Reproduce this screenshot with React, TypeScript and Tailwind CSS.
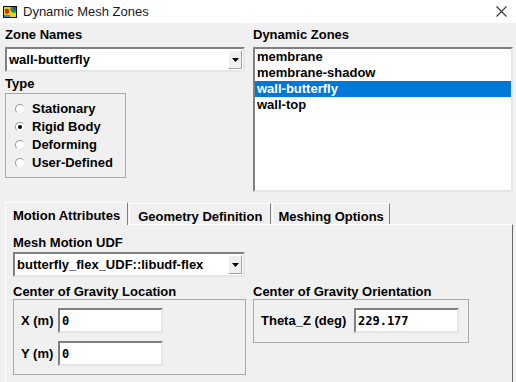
import React from "react";

const ZONES = ["membrane", "membrane-shadow", "wall-butterfly", "wall-top"];
const TYPES = ["Stationary", "Rigid Body", "Deforming", "User-Defined"];

function AppIcon() {
  return (
    <svg width="14" height="12" viewBox="0 0 14 12">
      <rect x="0" y="0" width="14" height="12" fill="#101010" />
      <rect x="1" y="1" width="12" height="10" fill="#1e9a3a" />
      <path d="M1 1 H8 Q6 4 9 6 Q11 8 13 6 V11 H1 Z" fill="#e8d21c" />
      <path d="M2 3 Q5 2 6 4 Q7 7 4 8 Q2 8 2 6 Z" fill="#d8281c" />
      <path d="M9 1 H13 V4 Q11 4 10 3 Z" fill="#2a4ad8" />
      <path d="M1 9 H7 V11 H1 Z" fill="#2a8ad8" />
    </svg>
  );
}

function Arrow() {
  return (
    <div className="w-[14px] h-full flex items-center justify-center bg-[#f0f0f0] border-l border-t border-white border-r border-r-[#a0a0a0] border-b border-b-[#a0a0a0]">
      <svg width="7" height="4" viewBox="0 0 7 4">
        <path d="M0 0 H7 L3.5 4 Z" fill="#000" />
      </svg>
    </div>
  );
}

function Dropdown({ value, width }: { value: string; width: string }) {
  return (
    <div className={`${width} h-[25px] flex bg-white border-2 border-t-[#808080] border-l-[#808080] border-b-[#e6e6e6] border-r-[#e6e6e6]`}>
      <div className="flex-1 flex items-center pl-[2px] text-[13px] font-bold text-black">{value}</div>
      <div className="py-[1px] pr-[1px]">
        <Arrow />
      </div>
    </div>
  );
}

function Field({ value }: { value: string }) {
  return (
    <div className="w-[105px] h-[25px] flex items-center pl-[2px] bg-white border-2 border-t-[#808080] border-l-[#808080] border-b-[#e6e6e6] border-r-[#e6e6e6] font-['DejaVu_Sans_Mono',monospace] text-[12px] font-bold text-black">
      {value}
    </div>
  );
}

function Radio({ checked }: { checked: boolean }) {
  return (
    <div className="w-[10px] h-[10px] rounded-full bg-white border border-t-[#9a9a9a] border-l-[#9a9a9a] border-b-[#e8e8e8] border-r-[#e8e8e8] flex items-center justify-center">
      {checked && <div className="w-[4px] h-[4px] rounded-full bg-black" />}
    </div>
  );
}

export default function App() {
  return (
    <div className="w-[516px] h-[382px] overflow-hidden bg-[#f0f0f0] font-['Liberation_Sans',Arial,sans-serif] text-black">
      <div className="h-[23px] bg-white flex items-center pl-[3px] pr-[9px]">
        <AppIcon />
        <span className="ml-[6px] text-[13px] text-[#1a1a1a]">Dynamic Mesh Zones</span>
        <svg className="ml-auto" width="11" height="11" viewBox="0 0 11 11">
          <path d="M0.5 0.5 L10.5 10.5 M10.5 0.5 L0.5 10.5" stroke="#333" strokeWidth="1.1" />
        </svg>
      </div>

      <div className="flex pt-[4px] pl-[5px] gap-[8px]">
        <div className="w-[240px] flex flex-col">
          <div className="h-[16px] text-[13px] font-bold leading-[16px]">Zone Names</div>
          <div className="mt-[4px]">
            <Dropdown value="wall-butterfly" width="w-[240px]" />
          </div>
          <div className="mt-[4px] h-[16px] text-[13px] font-bold leading-[16px]">Type</div>
          <div className="mt-[1px] w-[121px] h-[85px] border border-[#a8a8a8] pt-[6px] pl-[9px]">
            {TYPES.map((t, i) => (
              <div key={t} className="h-[18px] flex items-center gap-[7px]">
                <Radio checked={i === 1} />
                <span className="text-[13px] font-bold">{t}</span>
              </div>
            ))}
          </div>
        </div>

        <div className="w-[260px] flex flex-col">
          <div className="h-[16px] text-[13px] font-bold leading-[16px]">Dynamic Zones</div>
          <div className="mt-[4px] h-[145px] bg-white border-2 border-t-[#808080] border-l-[#808080] border-b-[#e6e6e6] border-r-[#e6e6e6]">
            {ZONES.map((z, i) => (
              <div
                key={z}
                className={`h-[16px] leading-[16px] pl-[2px] text-[13px] font-bold ${i === 2 ? "bg-[#0078d7] text-white" : ""}`}
              >
                {z}
              </div>
            ))}
          </div>
        </div>
      </div>

      <div className="mt-[9px] pl-[5px]">
        <div className="flex items-end h-[23px]">
          <div className="h-[23px] px-[7px] pt-[3px] bg-[#f0f0f0] border-l border-t border-white border-r border-r-[#808080] text-[13px] font-bold relative z-10 -mb-[1px]">
            Motion Attributes
          </div>
          <div className="ml-[1px] h-[21px] px-[8px] pt-[3px] border-l border-t border-white border-r border-r-[#808080] text-[13px] font-bold">
            Geometry Definition
          </div>
          <div className="ml-[1px] h-[21px] px-[5px] pt-[3px] border-l border-t border-white border-r border-r-[#808080] text-[13px] font-bold">
            Meshing Options
          </div>
        </div>
        <div className="w-[508px] h-[160px] border-l border-t border-white border-r border-r-[#696969] pl-[7px] pt-[10px]">
          <div className="h-[16px] text-[13px] font-bold leading-[16px]">Mesh Motion UDF</div>
          <div className="mt-[1px]">
            <Dropdown value="butterfly_flex_UDF::libudf-flex" width="w-[232px]" />
          </div>
          <div className="mt-[7px] flex gap-[7px]">
            <div className="flex flex-col">
              <div className="h-[15px] text-[13px] font-bold leading-[15px]">Center of Gravity Location</div>
              <div className="w-[233px] h-[76px] border border-[#a8a8a8] pt-[8px] pl-[7px] flex flex-col gap-[8px]">
                <div className="flex items-center">
                  <span className="w-[37px] text-[13px] font-bold">X (m)</span>
                  <Field value="0" />
                </div>
                <div className="flex items-center">
                  <span className="w-[37px] text-[13px] font-bold">Y (m)</span>
                  <Field value="0" />
                </div>
              </div>
            </div>
            <div className="flex flex-col">
              <div className="h-[15px] text-[13px] font-bold leading-[15px]">Center of Gravity Orientation</div>
              <div className="w-[216px] h-[44px] border border-[#a8a8a8] pt-[8px] pl-[7px]">
                <div className="flex items-center">
                  <span className="w-[93px] text-[13px] font-bold">Theta_Z (deg)</span>
                  <Field value="229.177" />
                </div>
              </div>
            </div>
          </div>
        </div>
      </div>
    </div>
  );
}
